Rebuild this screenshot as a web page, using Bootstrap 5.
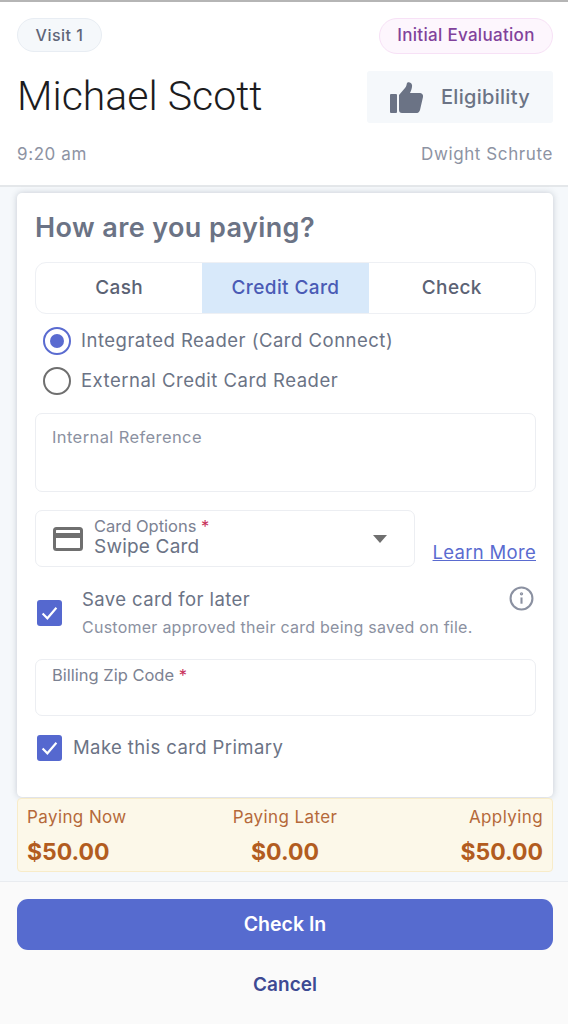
<!DOCTYPE html>
<html>
<head>
  <meta charset="UTF-8">
  <title>Check In</title>
  <meta name="viewport" content="width=device-width, initial-scale=1.0">
  <link href="https://cdn.jsdelivr.net/npm/bootstrap@5.3.0/dist/css/bootstrap.min.css" rel="stylesheet">
  <style>
    body {
      background: #fafafa;
      font-family: Inter, Roboto, sans-serif;
      color: #6b7385;
      height: 1024px;
      overflow: hidden;
    }
    .top-part {
      background: #fff;
      border-top: 2px solid #b5b5b5;
      border-bottom: 2px solid #e4e7ea;
      height: 187px;
      padding: 16px 15px 0 17px;
    }
    .pill-visit {
      background: #f5f8fb;
      border: 1px solid #e8edf3;
      border-radius: 17px;
      color: #5f6578;
      font-size: 16px;
      font-weight: 500;
      height: 34px;
      letter-spacing: .5px;
      width: 85px;
    }
    .pill-type {
      background: #fdf6fd;
      border: 1px solid #f7e1f6;
      border-radius: 18px;
      color: #81429b;
      font-size: 17px;
      font-weight: 500;
      height: 36px;
      letter-spacing: .3px;
      width: 174px;
    }
    .name-row { margin-top: 17px; height: 52px; }
    .name-text {
      color: #1c1c1e;
      font-family: Roboto, sans-serif;
      font-size: 41px;
      font-weight: 300;
      margin: 0;
    }
    .elig-box {
      background: #f5f8fb;
      border-radius: 3px;
      color: #6b7385;
      font-size: 20px;
      font-weight: 500;
      gap: 18px;
      height: 52px;
      letter-spacing: .3px;
      width: 186px;
    }
    .meta-row { color: #8d93a3; font-size: 17px; margin-top: 19px; letter-spacing: .6px; }
    .mid-part { background: #f5f8fb; height: 694px; padding: 6px 15px 0 17px; }
    .pay-card {
      background: #fff;
      border-radius: 5px;
      box-shadow: 0 0 6px rgba(60, 70, 90, .25);
      height: 604px;
      padding: 17px 17px 0 18px;
    }
    .pay-title { color: #6b7385; font-size: 27px; font-weight: 600; letter-spacing: .4px; line-height: 36px; margin: 0 0 16px; }
    .seg-group { border: 1px solid #eef0f4; border-radius: 11px; height: 52px; overflow: hidden; }
    .seg-item { color: #5b6274; flex: 1; font-size: 19px; font-weight: 500; letter-spacing: .4px; padding-top: 1px; }
    .seg-on { background: #d8e9fa; color: #4a5bb5; }
    .radio-list { margin-top: 7px; }
    .radio-row { color: #6b7385; font-size: 18.5px; gap: 10px; height: 40px; letter-spacing: .5px; padding-left: 8px; }
    .radio-dot { border: 2px solid #6f6f6f; border-radius: 50%; height: 28px; width: 28px; flex: none; }
    .radio-dot.on { border-color: #5a6bd0; padding: 5px; }
    .radio-dot.on span { background: #5a6bd0; border-radius: 50%; display: block; height: 14px; width: 14px; }
    .field-box { background: #fff; border: 1px solid #eceef2; border-radius: 7px; padding: 0 16px; }
    .field-ref { color: #8b91a1; font-size: 16.5px; height: 79px; letter-spacing: .4px; margin-top: 12px; padding-top: 11px; }
    .select-row { margin-top: 18px; }
    .select-box { align-items: center; display: flex; height: 57px; padding: 0 27px 0 18px; width: 380px; }
    .select-icon { flex: none; margin-left: -1px; margin-right: 11px; }
    .select-label { color: #7c8292; font-size: 16.5px; line-height: 18px; margin-top: -3px; }
    .select-val { color: #6b7385; font-size: 19px; letter-spacing: .2px; line-height: 23px; }
    .req-star { color: #c8325c; }
    .caret-down { border-left: 7px solid transparent; border-right: 7px solid transparent; border-top: 8px solid #6f6f6f; margin-left: auto; }
    .learn-link { color: #5a6bd0; font-size: 18.5px; letter-spacing: .3px; line-height: 24px; margin-bottom: 3px; }
    .tick-box { background: #5568cf; border-radius: 3px; flex: none; height: 26px; width: 25px; }
    .save-row { margin-top: 19px; }
    .save-row .tick-box { margin: 14px 0 0 2px; }
    .save-text { flex: 1; margin-left: 20px; }
    .save-main { color: #6b7385; font-size: 18.5px; letter-spacing: .4px; line-height: 26px; }
    .save-sub { color: #8b91a1; font-size: 16px; letter-spacing: .25px; line-height: 20px; margin-top: 5px; white-space: nowrap; }
    .info-icon { margin-right: 2px; }
    .field-zip { color: #7c8292; font-size: 16.5px; height: 57px; margin-top: 22px; padding-top: 3px; }
    .primary-row { color: #6b7385; font-size: 18.5px; gap: 11px; letter-spacing: .4px; margin-top: 18px; margin-left: 2px; }
    .sum-bar {
      background: #fcf8e9;
      border: 1px solid #f8ecc9;
      border-radius: 4px;
      color: #b5693a;
      font-size: 17px;
      height: 74px;
      letter-spacing: .4px;
      margin-top: 1px;
      padding: 6px 9px 0;
    }
    .sum-bar > div { flex: 1; }
    .sum-amt { color: #b25c20; font-size: 23px; font-weight: 700; letter-spacing: 0; margin-top: 4px; }
    .foot-part { border-top: 1px solid #e9ecf0; padding: 17px 15px 0 17px; text-align: center; }
    .btn-checkin { background: #566bcf; border: 0; border-radius: 11px; color: #fff; font-size: 19.5px; font-weight: 600; height: 51px; }
    .btn-checkin:hover { background: #566bcf; color: #fff; }
    .btn-cancel { color: #3d4a93; font-size: 19px; font-weight: 600; margin-top: 20px; padding: 0; }
  </style>
</head>
<body>
  <div class="top-part">
    <div class="d-flex justify-content-between align-items-start">
      <div class="pill-visit d-flex align-items-center justify-content-center">Visit 1</div>
      <div class="pill-type d-flex align-items-center justify-content-center">Initial Evaluation</div>
    </div>
    <div class="name-row d-flex justify-content-between align-items-center">
      <h1 class="name-text">Michael Scott</h1>
      <div class="elig-box d-flex align-items-center justify-content-center">
        <svg width="33" height="31" viewBox="0 0 33 31" fill="#6b7385"><rect x="0" y="12" width="7" height="19" rx="1"/><path d="M9 13 15 6c1.500-1.800 1.500-3.500 2-5 .5-1.300 4.500-1.300 5 2 .4 2.500-1 6-2 8h10c2 0 3.500 2 3 4l-3 13c-.4 1.500-1.500 3-3 3H12c-2 0-3-1-3-3z"/></svg>
        <span>Eligibility</span>
      </div>
    </div>
    <div class="meta-row d-flex justify-content-between">
      <span>9:20 am</span>
      <span>Dwight Schrute</span>
    </div>
  </div>

  <div class="mid-part">
    <div class="pay-card">
      <h2 class="pay-title">How are you paying?</h2>
      <div class="seg-group d-flex">
        <div class="seg-item d-flex align-items-center justify-content-center">Cash</div>
        <div class="seg-item seg-on d-flex align-items-center justify-content-center">Credit Card</div>
        <div class="seg-item d-flex align-items-center justify-content-center">Check</div>
      </div>
      <div class="radio-list">
        <div class="radio-row d-flex align-items-center"><div class="radio-dot on"><span></span></div>Integrated Reader (Card Connect)</div>
        <div class="radio-row d-flex align-items-center"><div class="radio-dot"></div>External Credit Card Reader</div>
      </div>
      <div class="field-box field-ref">Internal Reference</div>
      <div class="select-row d-flex justify-content-between align-items-end">
        <div class="field-box select-box">
          <svg class="select-icon" width="30" height="24" viewBox="0 0 30 24" fill="none" stroke="#6f6f6f" stroke-width="3"><rect x="1.500" y="1.500" width="27" height="21" rx="2"/><path d="M1.500 8.500h27" stroke-width="5"/></svg>
          <div>
            <div class="select-label">Card Options <span class="req-star">*</span></div>
            <div class="select-val">Swipe Card</div>
          </div>
          <div class="caret-down"></div>
        </div>
        <a href="#" class="learn-link">Learn More</a>
      </div>
      <div class="save-row d-flex">
        <div class="tick-box d-flex align-items-center justify-content-center">
          <svg width="17" height="14" viewBox="0 0 16 13" fill="none" stroke="#fff" stroke-width="2"><path d="M1.500 7 6 11.500 14.500 1.500"/></svg>
        </div>
        <div class="save-text">
          <div class="save-main">Save card for later</div>
          <div class="save-sub">Customer approved their card being saved on file.</div>
        </div>
        <svg class="info-icon" width="25" height="25" viewBox="0 0 24 24" fill="none" stroke="#8b91a1" stroke-width="2"><circle cx="12" cy="12" r="10.500"/><path d="M12 11v6"/><circle cx="12" cy="7.500" r=".6"/></svg>
      </div>
      <div class="field-box field-zip">Billing Zip Code <span class="req-star">*</span></div>
      <div class="primary-row d-flex align-items-center">
        <div class="tick-box d-flex align-items-center justify-content-center">
          <svg width="17" height="14" viewBox="0 0 16 13" fill="none" stroke="#fff" stroke-width="2"><path d="M1.500 7 6 11.500 14.500 1.500"/></svg>
        </div>
        <span>Make this card Primary</span>
      </div>
    </div>
    <div class="sum-bar d-flex">
      <div><div>Paying Now</div><div class="sum-amt">$50.00</div></div>
      <div class="text-center"><div>Paying Later</div><div class="sum-amt">$0.00</div></div>
      <div class="text-end"><div>Applying</div><div class="sum-amt">$50.00</div></div>
    </div>
  </div>

  <div class="foot-part">
    <button type="button" class="btn btn-checkin w-100">Check In</button>
    <button type="button" class="btn btn-cancel">Cancel</button>
  </div>

  <script src="https://cdn.jsdelivr.net/npm/bootstrap@5.3.0/dist/js/bootstrap.bundle.min.js"></script>
</body>
</html>
